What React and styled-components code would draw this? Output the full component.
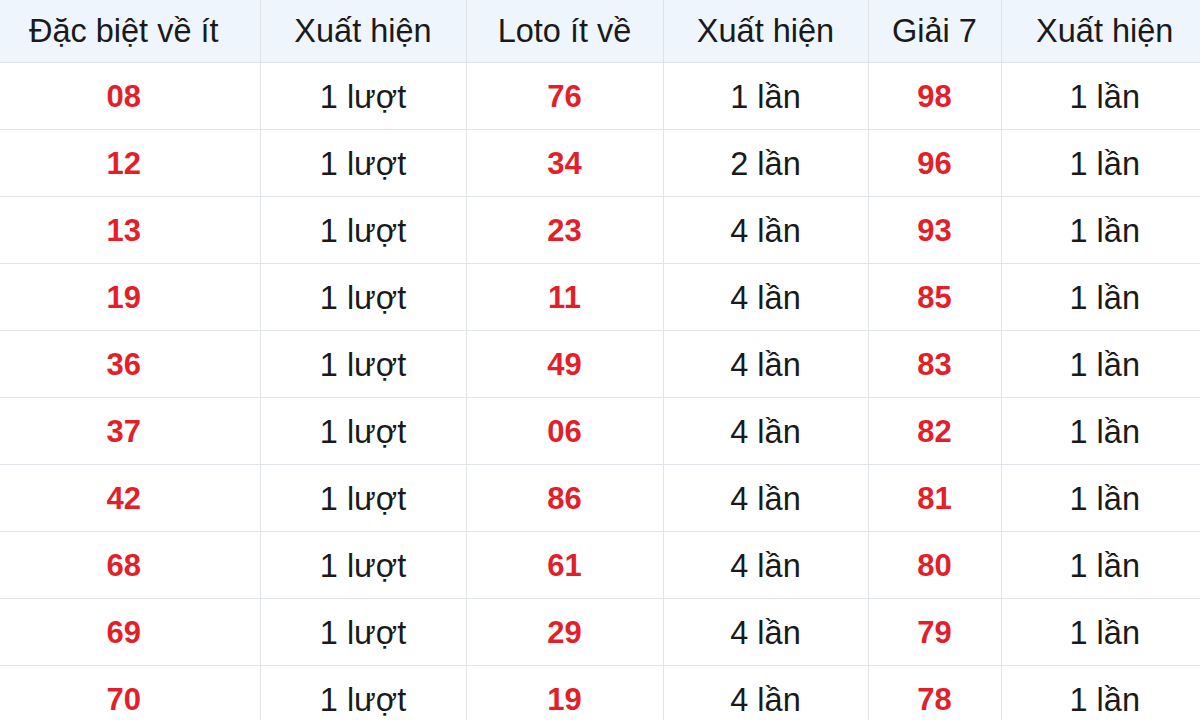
import styled, { createGlobalStyle } from 'styled-components';

const GlobalStyle = createGlobalStyle`
  html, body {
    margin: 0;
    padding: 0;
    background: #ffffff;
  }
  body {
    font-family: "Liberation Sans", Arial, sans-serif;
  }
`;

const rows = [
  ['08', '1 lượt', '76', '1 lần', '98', '1 lần'],
  ['12', '1 lượt', '34', '2 lần', '96', '1 lần'],
  ['13', '1 lượt', '23', '4 lần', '93', '1 lần'],
  ['19', '1 lượt', '11', '4 lần', '85', '1 lần'],
  ['36', '1 lượt', '49', '4 lần', '83', '1 lần'],
  ['37', '1 lượt', '06', '4 lần', '82', '1 lần'],
  ['42', '1 lượt', '86', '4 lần', '81', '1 lần'],
  ['68', '1 lượt', '61', '4 lần', '80', '1 lần'],
  ['69', '1 lượt', '29', '4 lần', '79', '1 lần'],
  ['70', '1 lượt', '19', '4 lần', '78', '1 lần'],
];

const headers = ['Đặc biệt về ít', 'Xuất hiện', 'Loto ít về', 'Xuất hiện', 'Giải 7', 'Xuất hiện'];
const widths = [272, 206, 197, 205, 133, 207];

const Wrapper = styled.div`
  width: 1200px;
  height: 720px;
  overflow: hidden;
`;

const Table = styled.table`
  width: 1220px;
  margin-left: -12px;
  table-layout: fixed;
  border-collapse: collapse;
  color: #1a1a1a;
`;

const HeadCell = styled.th`
  height: 62px;
  padding: 0;
  background: #eef5fd;
  font-weight: normal;
  font-size: 32.5px;
  text-align: center;
  border-bottom: 1px solid #dfe3e8;
  border-left: 1px solid #dfe3e8;
  color: #1a1a1a;

  &:first-child {
    border-left: none;
  }
`;

const Cell = styled.td`
  height: 64px;
  padding: 2px 0 0;
  text-align: center;
  font-size: ${(p) => (p.$number ? '31px' : '32.5px')};
  font-weight: ${(p) => (p.$number ? 'bold' : 'normal')};
  color: ${(p) => (p.$number ? '#e21f2b' : '#1a1a1a')};
  border-bottom: 1px solid #e1e4e8;
  border-left: 1px solid #e1e4e8;

  &:first-child {
    border-left: none;
  }
`;

export default function App() {
  return (
    <Wrapper>
      <GlobalStyle />
      <Table>
        <colgroup>
          {widths.map((w, i) => (
            <col key={i} style={{ width: w }} />
          ))}
        </colgroup>
        <thead>
          <tr>
            {headers.map((h, i) => (
              <HeadCell key={i}>{h}</HeadCell>
            ))}
          </tr>
        </thead>
        <tbody>
          {rows.map((r, i) => (
            <tr key={i}>
              {r.map((v, j) => (
                <Cell key={j} $number={j % 2 === 0}>
                  {v}
                </Cell>
              ))}
            </tr>
          ))}
        </tbody>
      </Table>
    </Wrapper>
  );
}
